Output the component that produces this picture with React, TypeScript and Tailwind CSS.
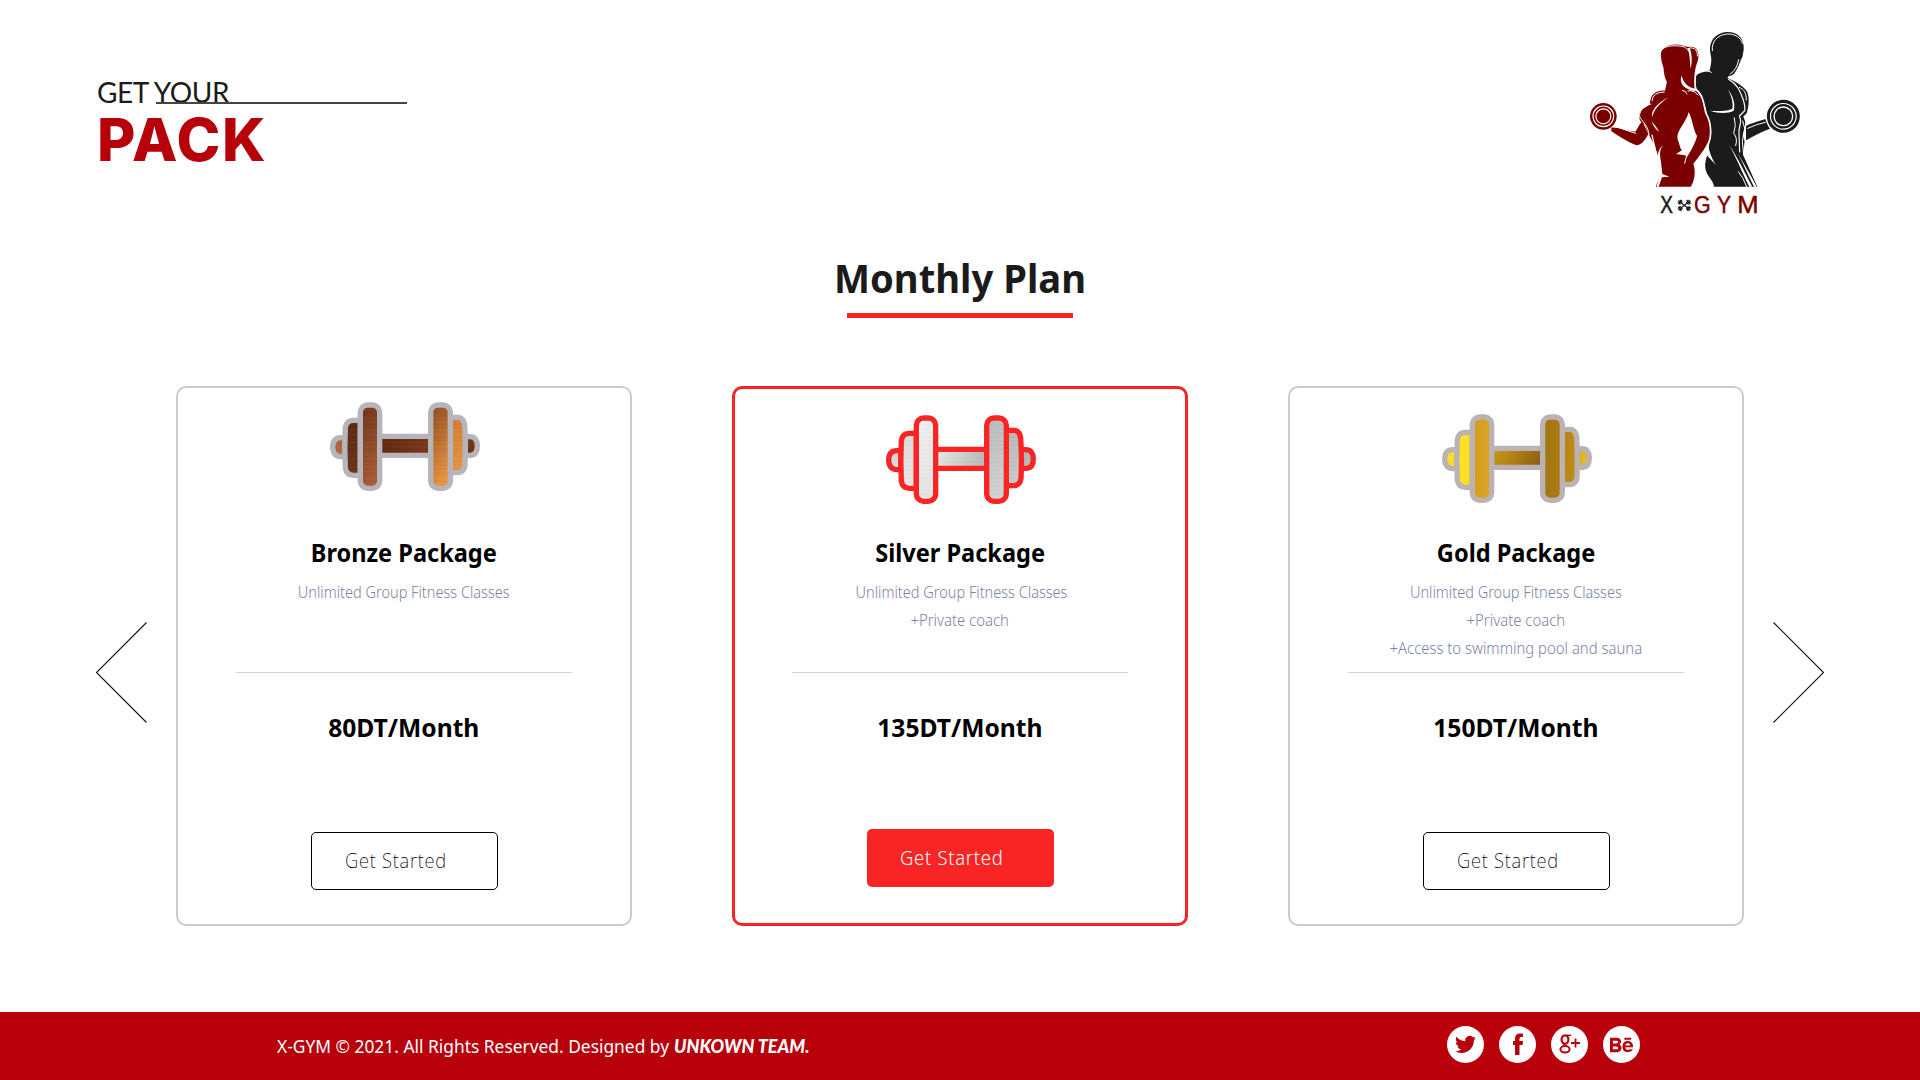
import React from "react";

type Metal = "bronze" | "silver" | "gold";

const metals: Record<Metal, { line: string; fills: [string, string][] }> = {
  bronze: {
    line: "#b5b5bb",
    fills: [["#a5603a", "#b5683c"], ["#5a2812", "#6b3218"], ["#6d3219", "#a85a34"], ["#5c260f", "#7a3818"], ["#8a4a20", "#e8933f"], ["#d07a35", "#e69343"], ["#7a3d1c", "#6b3015"]],
  },
  silver: {
    line: "#f92525",
    fills: [["#cfcfcf", "#dedede"], ["#d8d8d8", "#e8e8e8"], ["#f2f2f2", "#e4e4e4"], ["#ececec", "#b9b9b9"], ["#b9b9b9", "#d2d2d2"], ["#b4b4b4", "#cacaca"], ["#b0b0b0", "#bcbcbc"]],
  },
  gold: {
    line: "#bbb3b3",
    fills: [["#ffe22a", "#f8d828"], ["#ffe626", "#fbdc22"], ["#d39a1d", "#dba524"], ["#cf9c1c", "#8f620f"], ["#a3740f", "#ab7a14"], ["#b5820f", "#c08c1c"], ["#d9a81c", "#e8bd28"]],
  },
};

function Dumbbell({ metal }: { metal: Metal }) {
  const { line, fills } = metals[metal];
  const url = (i: number) => `url(#${metal}-${i})`;
  return (
    <svg viewBox="0 0 510 330" className="h-[110px] w-[170px]">
      <defs>
        {fills.map(([a, b], i) => (
          <linearGradient key={i} id={`${metal}-${i}`} x1="0" y1="0" x2={i === 3 || metal === "gold" ? "1" : "0.3"} y2={i === 3 || metal === "gold" ? "0.2" : "1"}>
            <stop offset="0" stopColor={a} />
            <stop offset="1" stopColor={b} />
          </linearGradient>
        ))}
        <pattern id={`${metal}-grain`} width="510" height="37" patternUnits="userSpaceOnUse">
          <path d="M0 4H510M0 15H510M0 29H510" stroke="#000" strokeOpacity={metal === "gold" ? 0 : 0.05} strokeWidth="2" />
          <path d="M0 9H510M0 22H510" stroke="#fff" strokeOpacity={metal === "gold" ? 0 : 0.08} strokeWidth="2" />
        </pattern>
      </defs>
      <g stroke={line} strokeWidth="16">
        <path d="M75 143H62Q39 143 38 171Q39 199 62 200H75Z" fill={url(0)} />
        <path d="M121 91H100Q80 91 76 112Q73 172 76 235Q80 256 100 256H121Z" fill={url(1)} />
        <path d="M436 140H452Q472 142 472 168Q472 194 452 196H436Z" fill={url(6)} />
        <path d="M390 82H416Q431 84 434 105Q438 165 435 227Q431 248 412 248H390Z" fill={url(5)} />
        <path d="M178 139H333V196H178Z" fill={url(3)} />
        <rect x="121" y="45" width="58" height="250" rx="22" fill={url(2)} />
        <rect x="332" y="45" width="59" height="250" rx="22" fill={url(4)} />
      </g>
      <g fill={`url(#${metal}-grain)`}>
        <rect x="84" y="99" width="29" height="149" />
        <rect x="129" y="53" width="42" height="234" rx="14" />
        <rect x="187" y="147" width="137" height="41" />
        <rect x="340" y="53" width="43" height="234" rx="14" />
        <rect x="399" y="90" width="28" height="150" />
      </g>
    </svg>
  );
}

function MiniBell({ turn }: { turn: string }) {
  return (
    <g transform={turn} stroke="#1b1b1b">
      <path d="M-18 0H18" strokeWidth="4" />
      <path d="M-18 -8V8M18 -8V8" strokeWidth="8" />
      <path d="M-24 -4V4M24 -4V4M-12 -6V6M12 -6V6" strokeWidth="3" />
    </g>
  );
}

function Logo() {
  return (
    <svg viewBox="0 0 690 600" className="h-[200px] w-[230px]" role="img" aria-label="X-GYM">
      {/* man */}
      <g fill="#1b1b1b">
        <path d="M394 116L390 92C388 64 405 40 438 36C474 34 494 56 491 90L487 112C480 122 477 140 468 152C462 163 456 168 446 168L442 174C462 182 492 198 502 216C509 236 506 262 500 280L490 290L496 305L493 330L488 345L494 362L489 404L532 500H402C400 480 380 470 376 445C374 430 378 415 383 403L388 370L394 340L376 262L352 215L346 190V172C352 158 370 156 388 154C391 142 394 130 394 116Z" />
        <path d="M498 318C515 308 540 304 556 297C560 310 564 318 570 326C548 334 520 348 496 362Z" />
        <circle cx="610" cy="289" r="49.5" />
      </g>
      <g fill="none" stroke="#fff" strokeLinecap="round">
        <circle cx="610" cy="289" r="38.5" strokeWidth="3.5" />
        <circle cx="610" cy="289" r="28" strokeWidth="4" />
        <path d="M397 92C394 64 412 46 440 42C466 41 482 52 487 70" strokeWidth="3" />
        <path d="M352 157C366 149 384 151 394 157" strokeWidth="3" />
        <path d="M476 119C473 138 464 154 450 163" strokeWidth="3" />
        <path d="M446 178C474 194 480 214 490 240C494 256 497 262 494 272L478 288" strokeWidth="3.5" />
        <path d="M478 202C492 208 499 218 499 240" strokeWidth="3" />
        <path d="M479 290C488 310 474 320 477 341L479 396" strokeWidth="3.5" />
        <path d="M463 293Q470 318 461 340Q474 354 467 377" strokeWidth="3" />
        <path d="M488 303L494 325L487 365L491 404" strokeWidth="3" />
        <path d="M503 325Q530 312 556 307" strokeWidth="3" />
        <path d="M496 320V364" strokeWidth="4" />
        <path d="M475 455Q490 472 500 500" strokeWidth="3" />
      </g>
      <g fill="#fff">
        <path d="M443 207C460 228 467 254 461 272C444 281 416 281 390 272C420 275 446 272 457 266C460 252 456 230 443 207Z" />
        <path d="M446 374C474 412 494 458 517 500H508C486 458 470 412 446 374Z" />
        <path d="M472 398C494 434 512 466 530 500H522C504 466 492 434 472 398Z" />
        <path d="M383 368Q389 406 407 434Q392 418 379 404Z" />
      </g>
      {/* woman */}
      <path d="M330 78C355 76 361 101 356 122C347 145 343 175 346 207C372 225 372 260 378 280C396 310 394 350 386 368C374 395 356 414 343 431C350 455 347 480 334 503H224C230 485 238 470 240 454L232 410L222 378L202 340L193 316C172 306 170 284 184 266L207 252C208 227 218 210 253 209L258 186C251 172 249 160 248 144L242 124L240 104C241 76 270 69 298 72C314 74 322 80 330 78Z" fill="#7a0000" stroke="#fff" strokeWidth="5" />
      <path d="M326 276C318 308 290 332 292 354L302 386L322 410C334 390 348 365 351 348C339 326 338 300 326 276Z" fill="#fff" />
      <path d="M94 323C112 321 142 334 166 335C175 324 178 308 188 306L205 342C194 362 185 375 169 376C143 366 119 350 94 334Z" fill="#7a0000" />
      <circle cx="70" cy="289" r="40" fill="#7a0000" />
      <g fill="none" stroke="#fff" strokeLinecap="round">
        <circle cx="70" cy="289" r="31" strokeWidth="3.5" />
        <circle cx="70" cy="289" r="22.5" strokeWidth="3.5" />
        <path d="M113 321Q143 333 167 340" strokeWidth="3" />
        <path d="M244 91C253 78 275 76 298 78C315 79 322 86 326 94" strokeWidth="3" />
        <path d="M329 84C345 81 354 94 352 108" strokeWidth="3" />
        <path d="M216 242Q218 216 253 216" strokeWidth="3" />
        <path d="M213 252C190 256 174 279 180 292C190 309 204 316 207 344" strokeWidth="3" />
        <path d="M216 345L240 450" strokeWidth="3.5" />
        <path d="M321 222Q318 212 307 211M324 213Q340 208 354 225" strokeWidth="3" />
        <path d="M326 382L314 430" strokeWidth="3" />
      </g>
      <g fill="#fff">
        <path d="M322 84C330 98 329 124 332 146C337 128 336 100 329 84Z" />
        <path d="M304 168C298 190 310 208 347 214V206C327 204 311 190 306 170Z" />
        <path d="M265 232C244 243 211 267 217 292C220 270 240 250 265 232Z" />
        <path d="M215 304Q222 326 238 336Q229 320 215 304Z" />
        <path d="M250 376C238 388 239 404 243 426L247 462L268 470L246 472L236 500H230L240 460L232 415C234 396 238 384 250 376Z" />
        <path d="M288 402L307 390L323 407Z" />
      </g>
      {/* wordmark */}
      <g fontFamily="'Liberation Sans', sans-serif" fontSize="74">
        <text x="241" y="579" fill="#1b1b1b" stroke="#1b1b1b" strokeWidth="1.5" textLength="38" lengthAdjust="spacingAndGlyphs">X</text>
        <text x="342" y="579" fill="#7a0000" stroke="#7a0000" strokeWidth="1.5" textLength="50" lengthAdjust="spacingAndGlyphs">G</text>
        <text x="411" y="579" fill="#7a0000" stroke="#7a0000" strokeWidth="1.5" textLength="42" lengthAdjust="spacingAndGlyphs">Y</text>
        <text x="472" y="579" fill="#7a0000" stroke="#7a0000" strokeWidth="1.5" textLength="64" lengthAdjust="spacingAndGlyphs">M</text>
      </g>
      <MiniBell turn="translate(313 556) rotate(38) scale(.9)" />
      <MiniBell turn="translate(313 556) rotate(-38) scale(.9)" />
    </svg>
  );
}

function Arrow({ flip = false }: { flip?: boolean }) {
  return (
    <button aria-label={flip ? "Next" : "Previous"} className="mt-[235px] h-[102px] w-[52px] shrink-0">
      <svg viewBox="0 0 52 102" className={flip ? "h-full w-full -scale-x-100" : "h-full w-full"}>
        <path d="M50.5 1.5L.5 51.5L50.5 101.5" fill="none" stroke="#111" strokeWidth="1.1" />
      </svg>
    </button>
  );
}

interface Plan {
  metal: Metal;
  name: string;
  perks: string[];
  price: string;
}

const plans: Plan[] = [
  { metal: "bronze", name: "Bronze Package", perks: ["Unlimited Group Fitness Classes"], price: "80DT/Month" },
  { metal: "silver", name: "Silver Package", perks: ["Unlimited Group Fitness Classes", "+Private coach"], price: "135DT/Month" },
  { metal: "gold", name: "Gold Package", perks: ["Unlimited Group Fitness Classes", "+Private coach", "+Access to swimming pool and sauna"], price: "150DT/Month" },
];

function PlanCard({ plan }: { plan: Plan }) {
  const featured = plan.metal === "silver";
  return (
    <article
      className={`flex h-[540px] w-[456px] shrink-0 flex-col items-center rounded-[10px] ${
        featured ? "border-3 border-[#f92525]" : "border-2 border-[#cbcbcb]"
      }`}
    >
      <div className={`flex ${plan.metal === "bronze" ? "h-[148px] pt-[2px] pl-[2px]" : featured ? "h-[147px] pt-[14px] pl-[2px]" : "h-[148px] pt-[14px] pl-px"}`}>
        <Dumbbell metal={plan.metal} />
      </div>
      <h2 className="scale-x-[0.942] text-[25px] leading-[32px] font-bold text-black">{plan.name}</h2>
      <ul className="mt-[10px] h-[94px] text-center text-base leading-7 font-light text-[#7a83a5]">
        {plan.perks.map((perk, i) => (
          <li
            key={perk}
            className={i === 0 ? (featured ? "scale-x-[0.908] pl-[4px]" : "scale-x-[0.908]") : "scale-x-[0.93]"}
          >
            {perk}
          </li>
        ))}
      </ul>
      <div className="h-px w-[336px] bg-[#cfcfcf]" />
      <p className="mt-[38px] scale-x-[0.985] text-[25px] leading-[32px] font-bold text-black">{plan.price}</p>
      <button
        className={`flex h-[58px] w-[187px] items-center rounded-[5px] pl-[33px] text-xl ${
          featured ? "mt-[86px] bg-[#f92525] font-light text-white" : "mt-[89px] border border-black font-extralight text-black"
        }`}
      >
        <span className="origin-left scale-x-[0.92] tracking-[0.8px]">Get Started</span>
      </button>
    </article>
  );
}

function Social({ label, children }: { label: string; children: React.ReactNode }) {
  return (
    <a aria-label={label} className="flex size-[37px] items-center justify-center rounded-full bg-white text-[#b8000b]">
      {children}
    </a>
  );
}

export default function App() {
  return (
    <div className="flex h-[1080px] w-[1920px] flex-col overflow-hidden bg-white font-['Noto_Sans',sans-serif]">
      <header className="flex h-[240px] justify-between pt-5 pr-[110px] pl-[97px]">
        <div className="relative pt-[54px]">
          <p className="font-['Lato',sans-serif] text-[28px] leading-[36px] tracking-[-0.4px] text-[#1b1b1b]">GET YOUR</p>
          <div className="absolute top-[82px] left-[59px] h-[2px] w-[251px] bg-[#444]" />
          <h1 className="font-['Inter',sans-serif] text-[59px] leading-[60px] font-extrabold tracking-[1.7px] text-[#b8000b]">PACK</h1>
        </div>
        <Logo />
      </header>

      <section className="flex h-[146px] flex-col items-center">
        <h2 className="mt-[8px] scale-x-[0.955] text-[40px] leading-[60px] font-bold text-[#1b1b1b]">Monthly Plan</h2>
        <div className="mt-[5px] h-[5px] w-[226px] bg-[#f92525]" />
      </section>

      <main className="flex pl-[96px]">
        <Arrow />
        <div className="mx-7 flex gap-[100px]">
          {plans.map((plan) => (
            <PlanCard key={plan.name} plan={plan} />
          ))}
        </div>
        <Arrow flip />
      </main>

      <footer className="mt-auto flex h-[68px] items-center justify-between bg-[#b8000b] pr-[280px] pl-[277px] text-white">
        <p className="flex text-lg leading-6">
          <span className="w-[397px] origin-left scale-x-[0.965] whitespace-nowrap">X-GYM © 2021. All Rights Reserved. Designed by</span>
          <span className="font-['Lato',sans-serif] font-black italic">UNKOWN TEAM.</span>
        </p>
        <div className="-mt-[4px] flex gap-[15px]">
          <Social label="Twitter">
            <svg viewBox="0 0 24 24" className="size-[21px]" fill="currentColor">
              <path d="M23.953 4.57a10 10 0 01-2.825.775 4.958 4.958 0 002.163-2.723c-.951.555-2.005.959-3.127 1.184a4.92 4.92 0 00-8.384 4.482C7.69 8.095 4.067 6.13 1.64 3.162a4.822 4.822 0 00-.666 2.475c0 1.71.87 3.213 2.188 4.096a4.904 4.904 0 01-2.228-.616v.06a4.923 4.923 0 003.946 4.827 4.996 4.996 0 01-2.212.085 4.936 4.936 0 004.604 3.417 9.867 9.867 0 01-6.102 2.105c-.39 0-.779-.023-1.17-.067a13.995 13.995 0 007.557 2.209c9.053 0 13.998-7.496 13.998-13.985 0-.21 0-.42-.015-.63A9.935 9.935 0 0024 4.59z" />
            </svg>
          </Social>
          <Social label="Facebook">
            <svg viewBox="0 0 10 22" className="h-[22px] w-[10px]" fill="currentColor">
              <path d="M2 22V12H0V8H2V5.500Q2 .5 7 .4H10V4H8Q6.500 4 6.500 5.500V8H10L9.600 12H6.500V22Z" />
            </svg>
          </Social>
          <Social label="Google Plus">
            <svg viewBox="0 0 22 20" className="h-[20px] w-[22px]" fill="none" stroke="currentColor">
              <ellipse cx="6" cy="5.500" rx="3.400" ry="4.200" strokeWidth="2.200" />
              <path d="M7 1.300H12" strokeWidth="1.400" />
              <path d="M6 9.700Q4 11 6.500 12.200" strokeWidth="2" />
              <ellipse cx="6" cy="15.300" rx="4.600" ry="3.200" strokeWidth="2" />
              <path d="M16.500 4.500V13.500M12 9H21" strokeWidth="1.800" />
            </svg>
          </Social>
          <Social label="Behance">
            <svg viewBox="0 0 24 24" className="size-[23px]" fill="currentColor">
              <path d="M22 7h-7V5h7v2zm1.726 10c-.442 1.297-2.029 3-5.101 3-3.074 0-5.564-1.729-5.564-5.675 0-3.910 2.325-5.920 5.466-5.920 3.082 0 4.964 1.782 5.375 4.426.078.506.109 1.188.095 2.140H15.970c.13 3.211 3.483 3.312 4.588 2.029h3.168zm-7.686-4h4.965c-.105-1.547-1.136-2.219-2.477-2.219-1.466 0-2.277.768-2.488 2.219zm-9.574 6.988H0V5.021h6.953c5.476.081 5.580 5.444 2.720 6.906 3.461 1.260 3.577 8.061-3.207 8.061zM3 11h3.584c2.508 0 2.906-3-.312-3H3v3zm3.391 3H3v3.016h3.341c3.055 0 2.868-3.016.05-3.016z" />
            </svg>
          </Social>
        </div>
      </footer>
    </div>
  );
}
